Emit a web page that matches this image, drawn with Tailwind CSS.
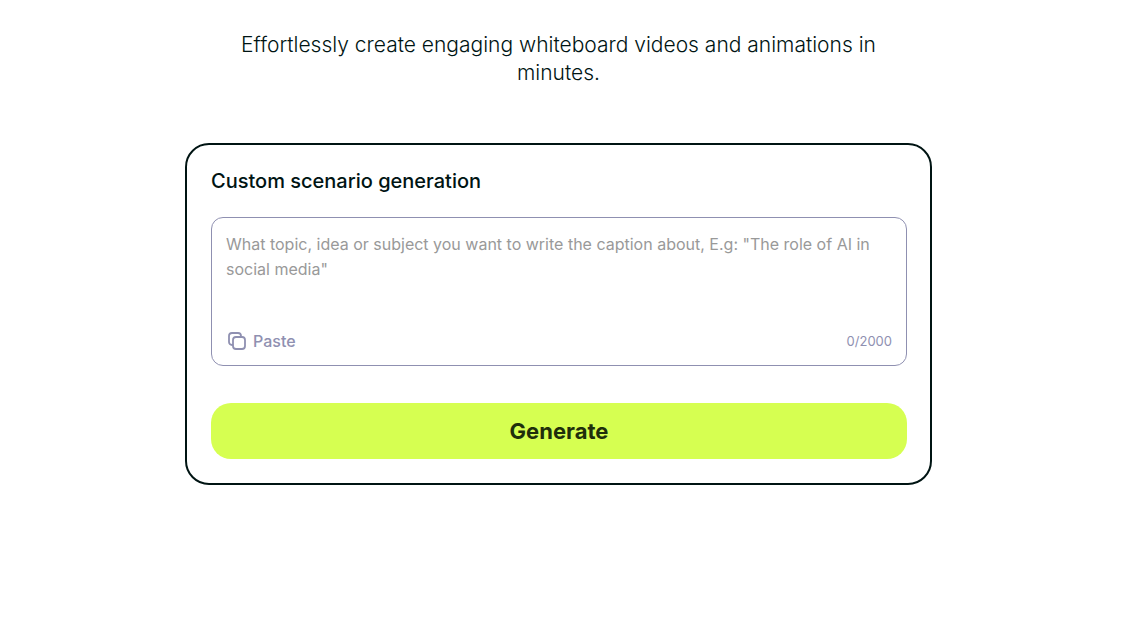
<!DOCTYPE html>
<html lang="en">
<head>
    <meta charset="UTF-8">
    <meta name="viewport" content="width=device-width, initial-scale=1.0">
    <title>Custom scenario generation</title>
    <!-- Tailwind CSS CDN -->
    <script src="https://cdn.jsdelivr.net/npm/@tailwindcss/browser@4"></script>
</head>
<body class="bg-white font-['Inter',sans-serif] text-[#001413]">
    <main class="flex flex-col items-center pt-[31px] pr-[26px]">
        <p class="w-full max-w-[680px] px-4 text-center text-[21px] leading-[28px] font-light">Effortlessly create engaging whiteboard videos and animations in minutes.</p>

        <!-- Generator card -->
        <form class="mt-14 w-full max-w-[747px] rounded-3xl border-2 border-[#001413] py-6 pr-[23px] pl-6" onsubmit="return false">
            <label for="topic" class="block text-[20px] leading-6 font-medium">Custom scenario generation</label>

            <div class="mt-6 rounded-xl border border-[#8f90b1] px-[14px] pt-[14px] pb-3">
                <textarea id="topic" rows="3" maxlength="2000" class="block h-[84px] w-full resize-none text-[16px] leading-[25px] outline-none placeholder:text-[#999999]" placeholder="What topic, idea or subject you want to write the caption about, E.g: &quot;The role of AI in social media&quot;"></textarea>
                <div class="mt-[13px] flex items-center justify-between text-[#8f90b1]">
                    <button type="button" id="pasteBtn" class="flex items-center gap-[7px] pl-[2px] text-[16px] leading-6 font-medium">
                        <svg class="size-[18px]" viewBox="0 0 18 18" fill="none" stroke="currentColor" stroke-width="1.8" stroke-linecap="round" stroke-linejoin="round">
                            <rect x="5" y="5" width="12" height="12" rx="3"/>
                            <path d="M4.5 13H4a3 3 0 0 1-3-3V4a3 3 0 0 1 3-3h6a3 3 0 0 1 3 3v.5"/>
                        </svg>
                        Paste
                    </button>
                    <span id="counter" class="text-[13px] leading-6">0/2000</span>
                </div>
            </div>

            <button type="submit" class="mt-[37px] block h-14 w-full rounded-[20px] bg-[#d6ff51] text-[22px] leading-7 font-bold text-[#1f2f0b]">Generate</button>
        </form>
    </main>

    <script>
        const topic = document.getElementById('topic');
        const counter = document.getElementById('counter');

        function updateCounter() {
            counter.textContent = `${topic.value.length}/2000`;
        }

        topic.addEventListener('input', updateCounter);

        document.getElementById('pasteBtn').addEventListener('click', async () => {
            topic.value = (await navigator.clipboard.readText()).slice(0, 2000);
            updateCounter();
        });
    </script>
</body>
</html>
